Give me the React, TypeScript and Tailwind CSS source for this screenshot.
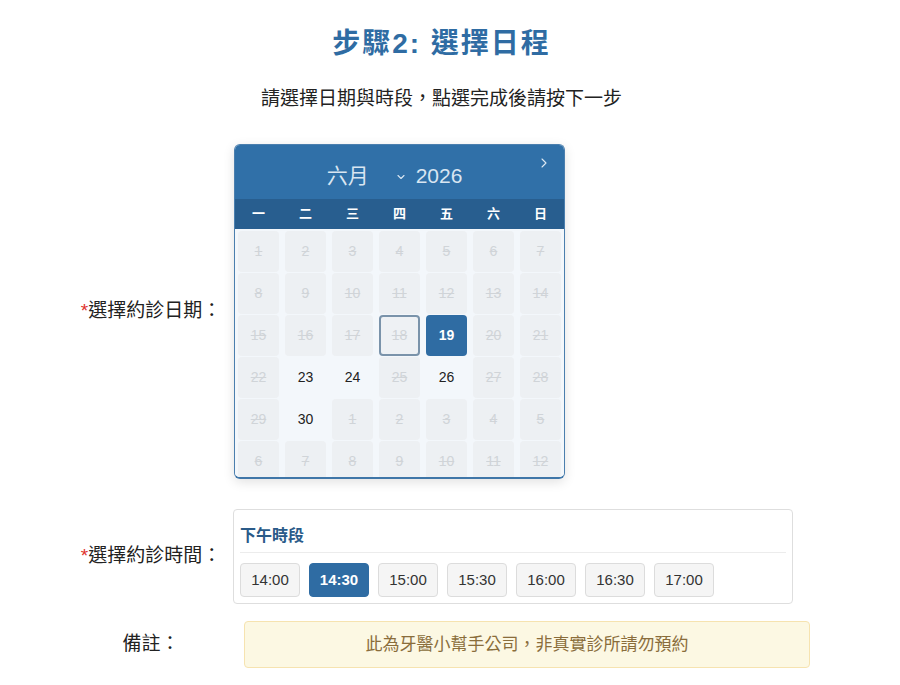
import { ChevronDown, ChevronRight } from "lucide-react";

const weekdays = ["一", "二", "三", "四", "五", "六", "日"];

type Day = { n: number; state: "off" | "on" | "selected" | "today" };

function buildDays(): Day[] {
  const days: Day[] = [];
  const enabled = [23, 24, 26, 30];
  for (let i = 1; i <= 30; i++) {
    let state: Day["state"] = "off";
    if (enabled.includes(i)) state = "on";
    if (i === 19) state = "selected";
    if (i === 18) state = "today";
    days.push({ n: i, state });
  }
  for (let i = 1; i <= 12; i++) days.push({ n: i, state: "off" });
  return days;
}

function Calendar() {
  const days = buildDays();
  return (
    <div className="relative w-[331px] rounded-[6px] border border-[#4b7fae] border-b-2 border-b-[#3f76a8] overflow-hidden shadow-[0_3px_12px_rgba(0,0,0,0.12)]">
      <div className="h-[54px] bg-[#3070a8] flex items-center justify-center pt-[8px] pr-[10px] text-[21px] text-[#d9e6f2]">
        <span className="mr-[26px]">六月</span>
        <ChevronDown size={12} strokeWidth={2.2} className="mr-[9px] mt-[2px]" />
        <span>2026</span>
      </div>
      <button className="absolute right-[12px] top-[10px] text-[#dce8f3]">
        <ChevronRight size={16} strokeWidth={1.6} />
      </button>
      <div className="h-[30px] bg-[#285e8f] grid grid-cols-7 items-center text-center text-[13px] font-bold text-white">
        {weekdays.map((w) => (
          <span key={w}>{w}</span>
        ))}
      </div>
      <div className="h-[248px] overflow-hidden bg-[#f3f7fb]">
        <div className="grid grid-cols-7 gap-y-[1px] pt-[2px]">
          {days.map((d, i) => {
            let cls = "bg-[#edf0f3] text-[#d0d4d8] line-through";
            if (d.state === "on") cls = "text-[#222]";
            if (d.state === "selected") cls = "bg-[#2f6ca3] text-white font-bold";
            if (d.state === "today") cls = "border-2 border-[#7a93aa] bg-[#eef1f4] text-[#d0d4d8] line-through";
            return (
              <div
                key={i}
                className={`mx-[3px] h-[41px] rounded-[4px] flex items-center justify-center text-[14px] ${cls}`}
              >
                {d.n}
              </div>
            );
          })}
        </div>
      </div>
    </div>
  );
}

const times = ["14:00", "14:30", "15:00", "15:30", "16:00", "16:30", "17:00"];

function Label({ text, required }: { text: string; required?: boolean }) {
  return (
    <div className="w-[173px] shrink-0 pl-[9px] flex justify-center text-[19px] text-[#222]">
      <span>
        {required && <span className="text-[#e0322c]">*</span>}
        {text}
      </span>
    </div>
  );
}

export default function App() {
  return (
    <div className="w-[900px] h-[685px] bg-white font-['Liberation_Sans','Noto_Sans_CJK_TC',sans-serif] text-[#222]">
      <h1 className="pt-[26px] pr-[17px] text-center text-[28px] leading-[36px] tracking-[2px] font-bold text-[#2f6ca3]">
        步驟2: 選擇日程
      </h1>
      <p className="mt-[23px] pr-[17px] text-center text-[19px] leading-[28px]">
        請選擇日期與時段，點選完成後請按下一步
      </p>

      <div className="mt-[31px] pl-[60px] flex items-center">
        <Label text="選擇約診日期：" required />
        <div className="ml-[1px]">
          <Calendar />
        </div>
      </div>

      <div className="mt-[30px] pl-[60px] flex items-center">
        <Label text="選擇約診時間：" required />
        <div className="w-[560px] h-[95px] border border-[#dedede] rounded-[4px] px-[6px] pt-[15px]">
          <div className="text-[16px] leading-[22px] font-bold text-[#2a5b89] pb-[5px] border-b border-[#ececec]">
            下午時段
          </div>
          <div className="mt-[10px] flex gap-[9px]">
            {times.map((t) => (
              <button
                key={t}
                className={
                  t === "14:30"
                    ? "w-[60px] h-[34px] rounded-[4px] border border-[#2f6ca3] bg-[#2f6ca3] text-white font-bold text-[15px]"
                    : "w-[60px] h-[34px] rounded-[4px] border border-[#dcdcdc] bg-[#f5f5f5] text-[#333] text-[15px]"
                }
              >
                {t}
              </button>
            ))}
          </div>
        </div>
      </div>

      <div className="mt-[17px] pl-[60px] flex items-center">
        <Label text="備註：" />
        <div className="ml-[11px] w-[566px] h-[47px] rounded-[4px] border border-[#f6e3b0] bg-[#fcf8e3] flex items-center justify-center text-[17px] text-[#8a6d3b]">
          此為牙醫小幫手公司，非真實診所請勿預約
        </div>
      </div>
    </div>
  );
}
